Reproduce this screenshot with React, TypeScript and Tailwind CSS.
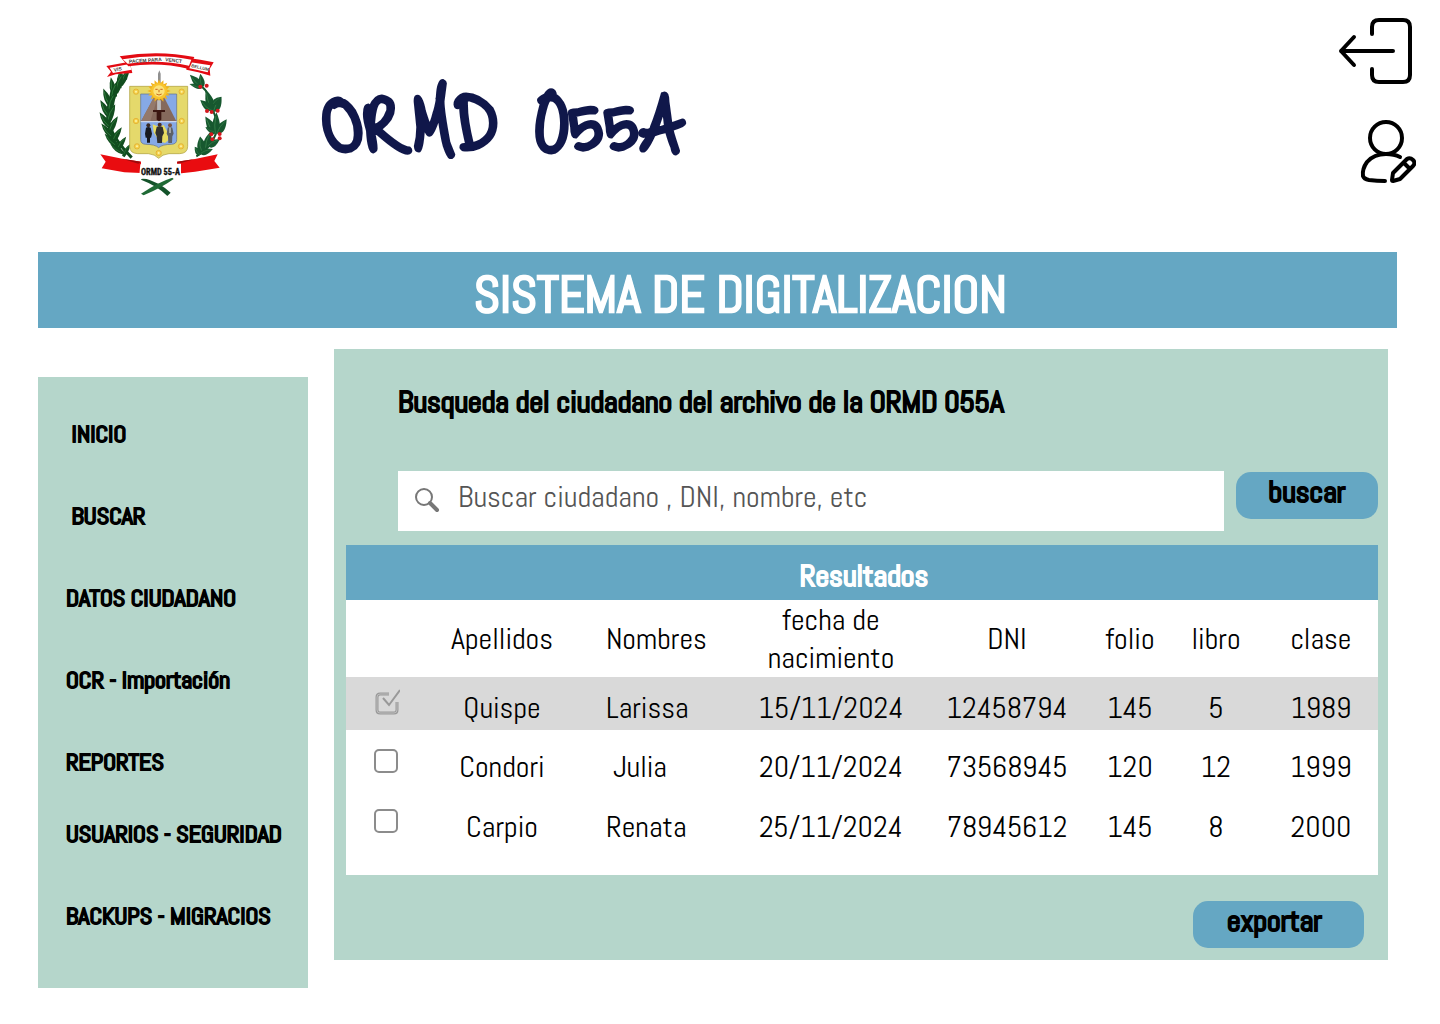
import { useState } from "react";

type Person = {
  lastName: string;
  firstName: string;
  date: string;
  dni: string;
  folio: string;
  book: string;
  year: string;
};

const people: Person[] = [
  { lastName: "Quispe", firstName: "Larissa", date: "15/11/2024", dni: "12458794", folio: "145", book: "5", year: "1989" },
  { lastName: "Condori", firstName: "\u00a0Julia", date: "20/11/2024", dni: "73568945", folio: "120", book: "12", year: "1999" },
  { lastName: "Carpio", firstName: "Renata", date: "25/11/2024", dni: "78945612", folio: "145", book: "8", year: "2000" },
];

const rowStyles = ["h-[53px] bg-[#d9d9d9]", "h-[66px]", "h-[54px]"];

const menuGroups = [
  ["\u00a0INICIO", "\u00a0BUSCAR", "DATOS CIUDADANO", "OCR - Importación", "REPORTES"],
  ["USUARIOS - SEGURIDAD", "BACKUPS - MIGRACIOS"],
];

/* Leaflets along the palm stem: x, y, direction, length. */
const palm = [
  [112, 112, -62, 46], [104, 120, -86, 46], [96, 134, -70, 52], [88, 146, -102, 50], [82, 162, -76, 54],
  [76, 178, -114, 52], [74, 194, -74, 54], [72, 210, -120, 52], [71, 226, -68, 52], [73, 242, -126, 50],
  [75, 258, -62, 50], [80, 272, -130, 48], [86, 286, -58, 46], [92, 298, -136, 46], [100, 310, -56, 42],
  [108, 320, -144, 40], [118, 328, -60, 36],
];

/* Laurel leaves: x, y, direction, length, half width. */
const laurel = [
  [352, 128, 226, 54, 12], [352, 128, 262, 42, 10], [352, 128, 196, 40, 8],
  [384, 200, 252, 70, 14], [386, 200, 298, 50, 13], [380, 196, 222, 46, 12], [384, 178, 318, 34, 10],
  [392, 268, 240, 62, 14], [392, 268, 272, 66, 13], [396, 266, 304, 52, 13], [388, 260, 206, 30, 9],
  [352, 322, 262, 48, 14], [362, 310, 286, 52, 12], [368, 304, 330, 42, 12], [346, 330, 236, 30, 10], [346, 326, 340, 40, 10],
];

const berries = [
  [346, 125], [365, 122], [366, 198], [380, 201], [398, 197],
  [379, 268], [404, 267], [382, 283], [404, 280],
];

const studs = [
  [153, 140], [290, 140], [153, 228], [290, 228], [156, 304], [288, 304], [221, 324],
];

function Emblem() {
  return (
    <svg viewBox="0 0 450 480" className="h-40 w-[150px] shrink-0" role="img" aria-label="Escudo ORMD 55-A">
      <path d="M140 338 Q44 240 78 180 Q90 130 124 98" fill="none" stroke="#0f4a1c" strokeWidth="9" />
      {palm.map(([x, y, a, l]) => (
        <g key={y} transform={`translate(${x} ${y}) rotate(${a}) scale(${l / 40})`}>
          <path d="M-8 -4 Q14 -14 40 0 Q16 10 -8 5 Z" fill="#124d1f" />
          <path d="M0 -2 Q18 -6 32 -1" stroke="#2f7a3c" strokeWidth="2" fill="none" />
        </g>
      ))}

      <path d="M350 124 Q372 140 384 196 Q400 230 392 268 Q376 310 334 334" fill="none" stroke="#14532a" strokeWidth="6" />
      {laurel.map(([x, y, a, l, w]) => (
        <g key={`${x}-${y}-${a}`} transform={`translate(${x} ${y}) rotate(${a}) scale(${l / 50} ${w / 12})`}>
          <path d="M0 0 Q10 -22 50 0 Q12 22 0 0 Z" fill="#17582f" />
          <path d="M2 -1 Q20 -6 42 -1" stroke="#38824b" strokeWidth="2" fill="none" />
        </g>
      ))}
      {berries.map(([x, y]) => (
        <circle key={`${x}-${y}`} cx={x} cy={y} r="6" fill="#d3171d" />
      ))}

      <path d="M134 124 H308 V304 Q308 325 284 326 H252 Q232 328 221 340 Q210 328 190 326 H158 Q134 325 134 304 Z" fill="#e5d96b" stroke="#a99a37" strokeWidth="2" />
      <path d="M167 147 H275 V284 Q275 297 260 298 Q232 298 221 308 Q210 298 182 298 Q167 297 167 284 Z" fill="#86a9e6" stroke="#5f6f8d" strokeWidth="2" />
      <path d="M168 229 L206 158 H238 L274 229 Z" fill="#85695c" />
      <path d="M168 229 L206 158 L214 170 L196 229 Z" fill="#94796b" />
      <path d="M167 230 H275" stroke="#dbe4f2" strokeWidth="3" />
      <path d="M203 238 L222 246 L236 240 L248 262 L250 286 L240 294 L222 288 L206 262 Z" fill="#e8dc60" />
      <g fill="#17191f">
        <path d="M183 248 Q190 244 197 248 L201 266 L198 278 H195 V293 H186 V278 H182 L180 266 Z" />
        <path d="M215 246 Q224 242 233 246 L237 264 L232 274 L231 294 H217 L215 274 L211 264 Z" fill="#31302f" />
        <path d="M248 248 Q255 244 262 248 L266 266 L262 274 L261 294 H250 L249 274 L245 266 Z" fill="#5c6168" />
      </g>
      <path d="M255 247 V264" stroke="#e8e8e8" strokeWidth="3" />
      <circle cx="190" cy="241" r="6" fill="#3a2a22" />
      <circle cx="224" cy="239" r="6" fill="#4b2d22" />
      <circle cx="255" cy="241" r="6" fill="#7a5544" />
      {studs.map(([x, y]) => (
        <g key={`${x}-${y}`}>
          <circle cx={x} cy={y} r="8" fill="#f4d34c" stroke="#e0a52a" strokeWidth="2" />
          <circle cx={x} cy={y} r="3" fill="#fdf0a8" />
        </g>
      ))}

      <path d="M219 86 L223 76 L227 86 V120 H219 Z" fill="#8f8f8f" />
      {Array.from({ length: 16 }, (_, i) => (
        <path key={i} d="M-6 -20 L0 -35 L6 -20 Z" transform={`translate(222 138) rotate(${i * 22.5})`} fill="#f2b21c" />
      ))}
      <circle cx="222" cy="138" r="24" fill="#f8c52f" />
      <circle cx="222" cy="138" r="17" fill="#fbe27b" />
      <path d="M211 133 H218 M226 133 H233 M214 147 Q222 153 230 147 M222 134 V142" stroke="#c8661c" strokeWidth="3" fill="none" />
      <path d="M217 166 H227 V196 H217 Z" fill="#d4d6da" />
      <path d="M222 166 V196" stroke="#85888f" strokeWidth="2" />
      <path d="M204 195 H240 V201 H229 V224 L222 229 L215 224 V201 H204 Z" fill="#3b1712" />

      <path d="M64 63 L134 50 L142 84 L92 88 L66 96 L78 80 Z" fill="#e30b13" />
      <path d="M74 68 L134 57 L140 74 L84 84 Z" fill="#fff" />
      <path d="M306 38 L346 44 L386 52 L374 72 L376 92 L340 82 L304 74 Z" fill="#e30b13" />
      <path d="M312 51 L376 61 L368 82 L310 69 Z" fill="#fff" />
      <path d="M104 34 Q220 14 328 36 L312 72 Q222 50 130 64 Z" fill="#e30b13" />
      <path d="M113 43 Q220 24 319 44 L312 62 Q222 42 128 56 Z" fill="#fff" />
      <g fontFamily="Liberation Sans" fontWeight="bold" fill="#3f3a3a" fontSize="15">
        <text x="87" y="80" transform="rotate(-10 87 80)">VIS</text>
        <text x="132" y="55" transform="rotate(-4 132 55)">PACEM PARA</text>
        <text x="240" y="48" transform="rotate(7 240 48)">VENCT</text>
        <text x="318" y="66" fontSize="13" transform="rotate(13 318 66)">BELLUM</text>
      </g>

      <path d="M172 398 Q222 410 257 443 L247 453 Q220 424 168 404 Z" fill="#14532a" />
      <path d="M262 398 Q222 410 168 446 L176 451 Q230 428 266 402 Z" fill="#1f6a35" />
      <path d="M46 328 L112 341 L168 350 V384 L118 382 L50 370 L62 350 Z" fill="#e90c10" />
      <path d="M398 328 L330 342 L276 350 V386 L330 380 L404 368 L388 348 Z" fill="#e90c10" />
      <path d="M112 341 L168 350 L160 356 Z M330 342 L276 350 L280 356 Z" fill="#9d0a0c" />
      <path d="M166 358 L288 356 V396 L162 402 Z" fill="#fff" />
      <text x="168" y="391" fontFamily="Roboto Condensed, Liberation Sans" fontSize="25" fontWeight="bold" fill="#111" stroke="#111">
        ORMD 55-A
      </text>
    </svg>
  );
}

function ExitIcon() {
  return (
    <svg viewBox="0 0 80 74" className="h-[74px] w-20" fill="none" stroke="#000" strokeWidth="4" strokeLinecap="round" strokeLinejoin="round" aria-hidden="true">
      <path d="M36 20 V13 Q36 6 43 6 H67 Q74 6 74 13 V61 Q74 68 67 68 H43 Q36 68 36 61 V55" />
      <path d="M57 37 H5 M18 23 L5 37 L18 51" />
    </svg>
  );
}

function EditUserIcon() {
  return (
    <svg viewBox="0 0 80 74" className="h-[74px] w-20" fill="none" stroke="#000" strokeWidth="4" strokeLinecap="round" strokeLinejoin="round" aria-hidden="true">
      <circle cx="50" cy="22" r="16" />
      <path d="M64 41 Q58 38 50 38 Q38 38 31 46 Q26 53 27 60 Q28 63 33 64 Q41 65 49 65" />
      <path d="M57 57 L71 43 Q74 41 77 44 Q80 47 77 50 L64 63 L57 65 Q56 65 56 64 Z M68 47 L74 53" />
    </svg>
  );
}

function SearchIcon() {
  return (
    <svg viewBox="0 0 26 26" className="size-[26px] shrink-0" fill="none" stroke="#777" strokeLinecap="round" aria-hidden="true">
      <circle cx="10" cy="9" r="8" strokeWidth="2" />
      <path d="M16 15 L23 22" strokeWidth="4" />
    </svg>
  );
}

function Tick({ label, initial }: { label: string; initial: boolean }) {
  const [checked, setChecked] = useState(initial);
  return (
    <span className="grid place-items-center">
      <input
        type="checkbox"
        aria-label={label}
        checked={checked}
        onChange={() => setChecked(!checked)}
        className="col-start-1 row-start-1 size-6 appearance-none rounded-[5px] border-2 border-[#8c8c8c] checked:border-transparent"
      />
      {checked && (
        <svg viewBox="0 0 28 28" className="pointer-events-none col-start-1 row-start-1 size-7" fill="none" stroke="#999" aria-hidden="true">
          <path d="M17 6 H8 Q5 6 5 9 V22 Q5 25 8 25 H22 Q25 25 25 22 V14" strokeWidth="3" />
          <path d="M17 6 H8 Q5 6 5 9 V22 Q5 25 8 25 H22 Q25 25 25 22 V14" stroke="#bdbdbd" />
          <path d="M11 10 L17 17 L28 2" strokeWidth="2" />
        </svg>
      )}
    </span>
  );
}

export default function App() {
  const [query, setQuery] = useState("");
  return (
    <div className="min-h-screen bg-white pb-9 font-['Abel','Roboto_Condensed',sans-serif] text-black">
      <header className="flex items-start pr-6 pl-[85px]">
        <div className="pt-[45px]">
          <Emblem />
        </div>
        <h1 className="pt-[55px] pb-[69px] pl-[86px] font-['Just_Me_Again_Down_Here','Zeyada',cursive] text-[96px] leading-[128px] font-bold text-[#10174a]">
          ORMD 055A
        </h1>
        <div className="ml-auto flex flex-col gap-7 pt-[14px]">
          <button type="button" aria-label="Salir"><ExitIcon /></button>
          <button type="button" aria-label="Editar usuario"><EditUserIcon /></button>
        </div>
      </header>

      <div className="mr-[43px] ml-[38px] bg-[#65a7c3] pt-[11px] pb-px pl-[46px] text-center text-[50px] leading-[64px] font-bold text-white [-webkit-text-stroke:1px]">
        SISTEMA DE DIGITALIZACION
      </div>

      <div className="mr-[52px] ml-[38px] flex items-start gap-[26px] pt-[21px]">
        <nav className="mt-7 flex w-[270px] shrink-0 flex-col gap-10 bg-[#b5d6cb] pt-[41px] pb-14 pl-7 text-[24px] leading-8 font-bold [-webkit-text-stroke:1px]">
          {menuGroups.map((group) => (
            <ul key={group[0]} className="flex flex-col gap-[50px]">
              {group.map((item) => (
                <li key={item}><a href="#">{item}</a></li>
              ))}
            </ul>
          ))}
        </nav>

        <main className="min-w-0 flex-1 bg-[#b5d6cb] pt-[34px] pr-[10px] pb-3 pl-3 text-[30px] leading-[38px]">
          <h2 className="pl-[52px] font-bold [-webkit-text-stroke:1px]">Busqueda del ciudadano del archivo de la ORMD 055A</h2>

          <form className="mt-[50px] flex items-start gap-3 pl-[52px]" onSubmit={(e) => e.preventDefault()}>
            <label className="flex h-[60px] flex-1 items-center gap-[18px] bg-white px-4">
              <SearchIcon />
              <input
                type="text"
                aria-label="Buscar ciudadano"
                value={query}
                onChange={(e) => setQuery(e.target.value)}
                placeholder="Buscar ciudadano , DNI, nombre, etc"
                className="h-full min-w-0 flex-1 pb-2 outline-none placeholder:text-[#555]"
              />
            </label>
            <button type="submit" className="mt-px h-[47px] w-[142px] rounded-[15px] bg-[#65a7c3] pb-2 font-bold [-webkit-text-stroke:1px]">
              buscar
            </button>
          </form>

          <div className="mt-[14px] bg-white pb-[25px]">
            <table className="w-full table-fixed text-center">
              <caption className="h-[55px] bg-[#65a7c3] pt-3 pl-1 font-bold text-white [-webkit-text-stroke:1px]">Resultados</caption>
              <colgroup>
                <col className="w-[80px]" />
                <col className="w-[152px]" />
                <col className="w-[162px]" />
                <col className="w-[182px]" />
                <col className="w-[170px]" />
                <col className="w-[76px]" />
                <col className="w-[96px]" />
                <col className="w-[114px]" />
              </colgroup>
              <thead>
                <tr className="h-[77px] *:pt-px *:font-normal">
                  <td />
                  <th scope="col">Apellidos</th>
                  <th scope="col" className="pl-7 text-left">Nombres</th>
                  <th scope="col">fecha de nacimiento</th>
                  <th scope="col">DNI</th>
                  <th scope="col">folio</th>
                  <th scope="col">libro</th>
                  <th scope="col">clase</th>
                </tr>
              </thead>
              <tbody>
                {people.map((p, i) => (
                  <tr key={p.dni} className={rowStyles[i]}>
                    <td className="pb-1"><Tick label={`Seleccionar ${p.lastName}`} initial={i === 0} /></td>
                    <td className="pt-2">{p.lastName}</td>
                    <td className="pt-2 pl-7 text-left">{p.firstName}</td>
                    <td className="pt-2">{p.date}</td>
                    <td className="pt-2">{p.dni}</td>
                    <td className="pt-2">{p.folio}</td>
                    <td className="pt-2">{p.book}</td>
                    <td className="pt-2">{p.year}</td>
                  </tr>
                ))}
              </tbody>
            </table>
          </div>

          <div className="mt-[26px] flex justify-end pr-[14px]">
            <button type="button" className="h-[47px] w-[171px] rounded-[15px] bg-[#65a7c3] pr-2 pb-2 font-bold [-webkit-text-stroke:1px]">
              exportar
            </button>
          </div>
        </main>
      </div>
    </div>
  );
}
